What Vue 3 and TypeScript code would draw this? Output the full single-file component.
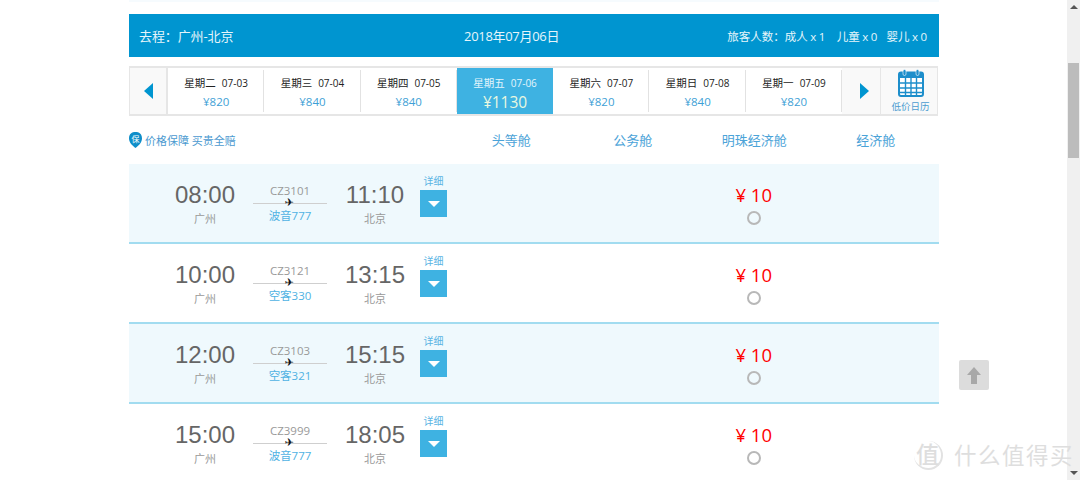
<script setup lang="ts">
interface Day { week: string; date: string; price: string; active?: boolean }
interface Flight { dep: string; no: string; plane: string; arr: string }
const days: Day[] = [
  { week: '星期二', date: '07-03', price: '¥820' },
  { week: '星期三', date: '07-04', price: '¥840' },
  { week: '星期四', date: '07-05', price: '¥840' },
  { week: '星期五', date: '07-06', price: '¥1130', active: true },
  { week: '星期六', date: '07-07', price: '¥820' },
  { week: '星期日', date: '07-08', price: '¥840' },
  { week: '星期一', date: '07-09', price: '¥820' },
]
const flights: Flight[] = [
  { dep: '08:00', no: 'CZ3101', plane: '波音777', arr: '11:10' },
  { dep: '10:00', no: 'CZ3121', plane: '空客330', arr: '13:15' },
  { dep: '12:00', no: 'CZ3103', plane: '空客321', arr: '15:15' },
  { dep: '15:00', no: 'CZ3999', plane: '波音777', arr: '18:05' },
]
const cabins = ['头等舱', '公务舱', '明珠经济舱', '经济舱']
</script>

<template>
  <div class="page">
    <main class="main">
      <div class="top-edge"></div>
      <header class="bar">
        <span class="route">去程：广州-北京</span>
        <span class="day">2018年07月06日</span>
        <span class="pax">旅客人数：成人 x 1 <i>儿童 x 0</i><i>婴儿 x 0</i></span>
      </header>

      <nav class="strip">
        <div class="arrow">
          <svg width="9" height="16" viewBox="0 0 9 16"><path d="M9 0V16L0 8Z" fill="#0095d0" /></svg>
        </div>
        <div v-for="d in days" :key="d.date" class="date" :class="{ active: d.active }">
          <div class="date-top"><span>{{ d.week }}</span><span class="md">{{ d.date }}</span></div>
          <div class="date-price">{{ d.price }}</div>
        </div>
        <div class="arrow next">
          <svg width="9" height="16" viewBox="0 0 9 16"><path d="M0 0V16L9 8Z" fill="#0095d0" /></svg>
        </div>
        <div class="cal">
          <svg width="26" height="28" viewBox="0 0 26 28">
            <rect x="1" y="3.5" width="24" height="23.5" rx="2" fill="#fff" stroke="#1d8ecb" stroke-width="2" />
            <rect x="1" y="3" width="24" height="6" fill="#1d8ecb" />
            <path d="M2 14H24M2 19H24M2 23.5H24M7.5 9V27M13 9V27M18.5 9V27" stroke="#1d8ecb" stroke-width="1.4" fill="none" />
            <rect x="5" y="0.5" width="3" height="6" rx="1.5" fill="#1d8ecb" stroke="#fff" stroke-width=".6" />
            <rect x="18" y="0.5" width="3" height="6" rx="1.5" fill="#1d8ecb" stroke="#fff" stroke-width=".6" />
          </svg>
          <span>低价日历</span>
        </div>
      </nav>

      <div class="cabins">
        <div class="guarantee">
          <svg width="13" height="16" viewBox="0 0 13 16">
            <path d="M6.5 0C10 0 13 1.500 13 6.500C13 11 9 14 6.500 16C4 14 0 11 0 6.500C0 1.500 3 0 6.500 0Z" fill="#0f8ec9" />
            <text x="6.500" y="10" text-anchor="middle" font-size="8" fill="#fff" font-family="'Noto Sans CJK SC', sans-serif">保</text>
          </svg>
          <span>价格保障 买贵全赔</span>
        </div>
        <div v-for="c in cabins" :key="c" class="cabin">{{ c }}</div>
      </div>

      <section v-for="(f, i) in flights" :key="f.no" class="row" :class="{ tint: i % 2 === 0 }">
        <div class="info">
          <div class="time-col">
            <div class="time">{{ f.dep }}</div>
            <div class="city">广州</div>
          </div>
          <div class="flight">
            <div class="no">{{ f.no }}</div>
            <div class="line"><span class="plane">✈</span></div>
            <div class="model">{{ f.plane }}</div>
          </div>
          <div class="time-col">
            <div class="time">{{ f.arr }}</div>
            <div class="city">北京</div>
          </div>
          <div class="detail">
            <span>详细</span>
            <div class="toggle"><b></b></div>
          </div>
        </div>
        <div class="fare"></div>
        <div class="fare"></div>
        <div class="fare">
          <div class="price">¥ 10</div>
          <div class="radio"></div>
        </div>
        <div class="fare"></div>
      </section>
    </main>

    <aside class="scrollbar">
      <div class="sb-up"></div>
      <div class="sb-thumb"></div>
      <div class="sb-down"></div>
    </aside>

    <button class="to-top" type="button" aria-label="top">
      <svg width="14" height="17" viewBox="0 0 14 17"><path d="M7 0L14 8H10V17H4V8H0Z" fill="#a8a8a8" /></svg>
    </button>

    <div class="mark">
      <span class="mark-circle">值</span>
      <span class="mark-text">什么值得买</span>
    </div>
  </div>
</template>

<style>
html, body { margin: 0; height: 100%; overflow: hidden; background: #fff; }
</style>

<style scoped>
.page {
  position: relative;
  display: flex;
  width: 1080px;
  height: 480px;
  overflow: hidden;
  font-family: "Open Sans", "Noto Sans CJK SC", sans-serif;
  background: #fff;
}
.main { width: 810px; margin-left: 129px; margin-right: 128px; flex: none; }
.top-edge { height: 2px; background: #f6fbfe; margin-bottom: 12px; }
.bar {
  height: 43px;
  background: #0095d0;
  color: #e6f5fb;
  display: flex;
  align-items: center;
  padding: 0 12px 0 10px;
  font-size: 13px;
}
.route { font-size: 13px; letter-spacing: -.1px; width: 325px; flex: none; }
.day { font-size: 13px; letter-spacing: -.3px; }
.pax { margin-left: auto; font-size: 11.500px; word-spacing: -.5px; }
.pax i { font-style: normal; margin-left: 9px; }
.strip {
  display: flex;
  height: 50px;
  width: 809px;
  margin-top: 9px;
  border: 1px solid #e6e6e6;
  border-width: 2px 1px;
  box-sizing: border-box;
}
.arrow {
  width: 38px;
  flex: none;
  background: #f9f9f9;
  display: flex;
  align-items: center;
  justify-content: center;
  border-right: 2px solid #e6e6e6;
  box-sizing: border-box;
}
.arrow.next { border-right: 1px solid #e6e6e6; width: 39px; padding-left: 6px; }
.date {
  width: 96.300px;
  flex: none;
  text-align: center;
  box-sizing: border-box;
  position: relative;
  padding-top: 7px;
}
.date::after {
  content: "";
  position: absolute;
  right: 0;
  top: 2px;
  bottom: 2px;
  width: 1px;
  background: #e2e2e2;
}
.date-top {
  display: flex;
  justify-content: center;
  gap: 6px;
  font-size: 10.500px;
  line-height: 16px;
  color: #222;
}
.md { font-size: 10px; }
.date-price {
  font-size: 11.500px;
  line-height: 20px;
  color: #3e9fd6;
  margin-top: 1px;
}
.date.active { background: #3eb2e2; }
.date.active .date-top { color: #e4f5fc; }
.date.active .date-price { color: #e9f8e0; font-size: 15.500px; line-height: 22px; margin-top: 0; }
.date.active::after { display: none; }
.cal {
  flex: 1;
  background: #f9f9f9;
  display: flex;
  flex-direction: column;
  align-items: center;
  color: #4b9cd0;
  font-size: 9.500px;
  line-height: 12px;
  gap: 4px;
  padding: 1px 0 0 3px;
}
.cabins {
  display: grid;
  grid-template-columns: 321px repeat(4, 121.500px);
  height: 48px;
  align-items: center;
  font-size: 13px;
  color: #4ba3d8;
}
.guarantee {
  display: flex;
  align-items: center;
  gap: 3px;
  font-size: 11px;
  color: #4c9ad0;
  margin-top: -1px;
}
.cabin { text-align: center; margin-top: -2px; padding-left: 1px; }
.row {
  display: grid;
  grid-template-columns: 321px repeat(4, 121.500px);
  height: 80px;
  box-sizing: border-box;
  border-bottom: 2px solid #a2dcf0;
}
.row.tint { background: #eff9fd; }
.info {
  display: flex;
  align-items: flex-start;
  padding-left: 46px;
  box-sizing: border-box;
}
.time-col { width: 60px; text-align: center; padding-top: 15px; }
.time { font-size: 24px; line-height: 32px; color: #666; font-family: "Liberation Sans", sans-serif; }
.city { font-size: 11px; line-height: 14px; color: #999; margin-top: 1px; }
.flight { width: 74px; margin: 0 18px; text-align: center; padding-top: 20px; }
.no { font-size: 11.500px; line-height: 14px; color: #999; }
.line { height: 1px; background: #cfcfcf; margin-top: 5px; position: relative; }
.plane {
  position: absolute;
  left: 29px;
  top: -5px;
  width: 14px;
  font-size: 11px;
  line-height: 10px;
  color: #111;
  font-family: "DejaVu Sans", sans-serif;
}
.model { font-size: 11.500px; line-height: 14px; color: #4fb2e3; margin-top: 5px; }
.detail { width: 27px; margin-left: 15px; padding-top: 10px; text-align: center; }
.detail span { display: block; font-size: 10px; line-height: 14px; color: #5ab4e4; }
.toggle {
  width: 27px;
  height: 27px;
  margin-top: 2px;
  background: #3eb2e2;
  display: flex;
  align-items: center;
  justify-content: center;
}
.toggle b {
  width: 0;
  height: 0;
  border-style: solid;
  border-width: 6px 6.500px 0;
  border-color: #fff transparent transparent;
}
.fare { text-align: center; padding-top: 19px; }
.price { font-size: 18.500px; line-height: 24px; color: #f00; }
.radio {
  width: 14px;
  height: 14px;
  box-sizing: border-box;
  border: 2px solid #b8b8b8;
  border-radius: 50%;
  margin: 4px auto 0;
}
.scrollbar {
  flex: none;
  width: 13px;
  background: #f0f0f0;
  position: relative;
  display: flex;
  flex-direction: column;
  align-items: center;
}
.sb-up {
  width: 0; height: 0;
  margin-top: 5px;
  border-style: solid;
  border-width: 0 4px 4px;
  border-color: transparent transparent #555;
}
.sb-thumb { width: 11px; height: 95px; margin-top: 54px; background: #bcbcbc; }
.sb-down {
  width: 0; height: 0;
  margin-top: auto;
  margin-bottom: 5px;
  border-style: solid;
  border-width: 4px 4px 0;
  border-color: #555 transparent transparent;
}
.to-top {
  position: absolute;
  left: 959px;
  top: 360px;
  width: 30px;
  height: 30px;
  padding: 0;
  border: none;
  border-radius: 2px;
  background: #dcdcdc;
  display: flex;
  align-items: center;
  justify-content: center;
}
.mark {
  position: absolute;
  left: 914px;
  top: 441px;
  display: flex;
  align-items: center;
  gap: 11px;
  color: #dedede;
}
.mark-circle {
  width: 27px;
  height: 27px;
  border-radius: 50%;
  border-right: 2px solid #e2e2e2;
  border-bottom: 2px solid #e2e2e2;
  font-size: 23px;
  line-height: 26px;
  text-align: center;
  font-weight: 500;
}
.mark-text { font-size: 22.500px; line-height: 28px; letter-spacing: 1.500px; white-space: nowrap; }
</style>
